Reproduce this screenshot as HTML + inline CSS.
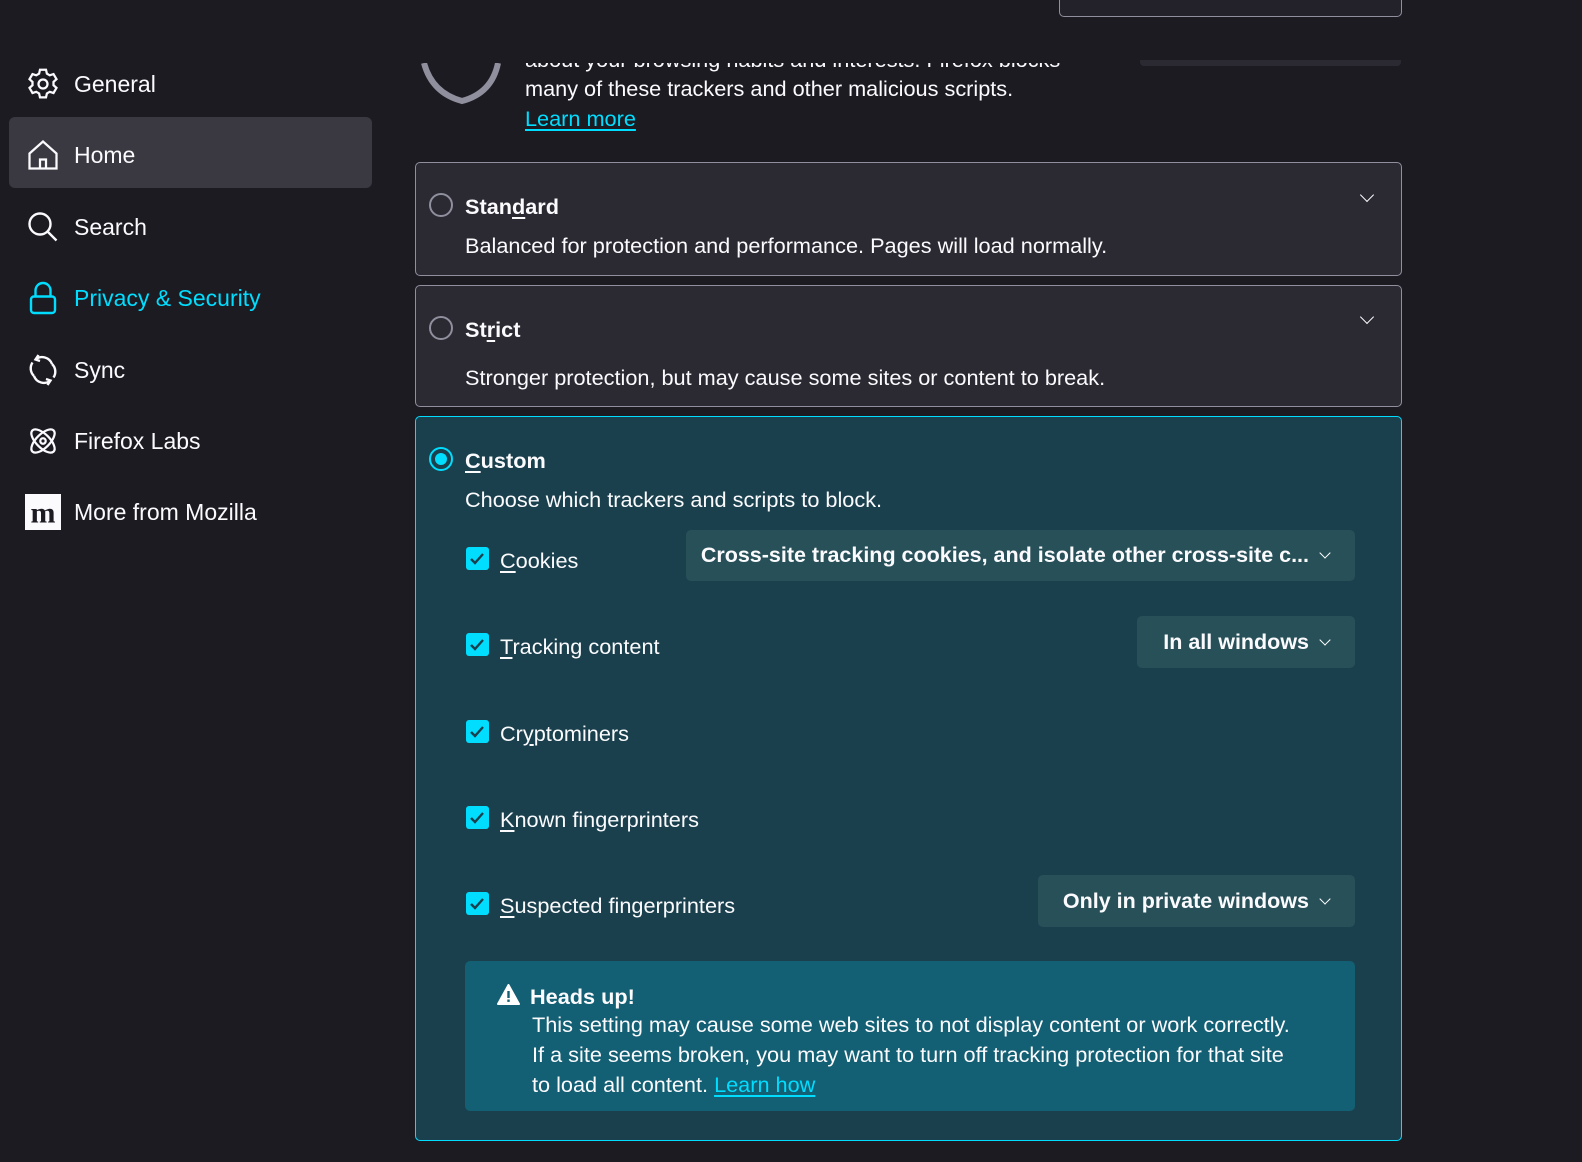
<!DOCTYPE html>
<html><head><meta charset="utf-8"><style>
*{margin:0;padding:0;box-sizing:border-box}
body{width:1582px;height:1162px;background:#1c1b22;color:#fbfbfe;font-family:"Liberation Sans",sans-serif;position:relative;overflow:hidden}
.a{position:absolute}
.nav{position:absolute;left:25px;display:flex;align-items:center;font-size:23px;height:40px}
.nav svg{width:36px;height:36px;margin-right:13px}
.card{position:absolute;left:415px;width:987px;background:#2b2a33;border:1px solid #8f8f9d;border-radius:5px}
.radio{position:absolute;width:24px;height:24px;border:2px solid #8f8f9d;border-radius:50%}
.t{position:absolute;font-size:21.7px;white-space:nowrap}
.b{font-weight:bold}
.cb{position:absolute;left:466px;width:23px;height:23px;background:#00ddff;border-radius:3px}
.cb svg{width:23px;height:23px}
.dd{position:absolute;background:#285059;border-radius:5px;font-size:21.5px;font-weight:bold;display:flex;align-items:center;justify-content:flex-end;padding-right:26px;white-space:nowrap}
.dd:after{content:"";width:7px;height:7px;border-right:1.5px solid #fff;border-bottom:1.5px solid #fff;transform:rotate(45deg);margin-left:12px;margin-top:-5px}
.chev{position:absolute;width:10px;height:10px;border-right:1.8px solid #fbfbfe;border-bottom:1.8px solid #fbfbfe;transform:rotate(45deg)}
u{text-decoration:underline;text-underline-offset:3px}
</style></head><body>
<div class="a" style="left:1059px;top:-20px;width:343px;height:37px;border:1px solid #8f8f9d;border-radius:5px;background:#23222b"></div>
<div class="a" style="left:1140px;top:60px;width:261px;height:6px;background:#2b2a33;border-radius:0 0 4px 4px"></div>
<div class="a" style="left:0;top:63px;width:1582px;height:80px;overflow:hidden">
 <div class="t" style="left:525px;top:-16px">about your browsing habits and interests. Firefox blocks</div>
</div>
<svg class="a" style="left:418px;top:63px" width="90" height="45"><path d="M6 0 Q14 30 44 38 Q74 30 80 0" fill="none" stroke="#8f8f9d" stroke-width="6"/></svg>
<div class="t" style="left:525px;top:76px">many of these trackers and other malicious scripts.</div>
<div class="t" style="left:525px;top:106px;color:#00ddff"><u>Learn more</u></div>

<div class="a" style="left:9px;top:117px;width:363px;height:71px;background:#3a3941;border-radius:6px"></div>
<div class="nav" style="top:64px"><svg viewBox="0 0 24 24" fill="none" stroke="#fbfbfe" stroke-width="1.5"><path d="M10 2.5h4l.6 2.6 1.9 1.1 2.5-.8 2 3.4-2 1.8v2.2l2 1.8-2 3.4-2.5-.8-1.9 1.1-.6 2.6h-4l-.6-2.6-1.9-1.1-2.5.8-2-3.4 2-1.8v-2.2l-2-1.8 2-3.4 2.5.8 1.9-1.1z"/><circle cx="12" cy="12" r="3"/></svg>General</div>
<div class="nav" style="top:135px"><svg viewBox="0 0 24 24" fill="none" stroke="#fbfbfe" stroke-width="1.5"><path d="M3 11 12 3l9 8v10H3z"/><path d="M10 21v-6h4v6"/></svg>Home</div>
<div class="nav" style="top:207px"><svg viewBox="0 0 24 24" fill="none" stroke="#fbfbfe" stroke-width="1.6"><circle cx="10" cy="10" r="7"/><path d="m15 15 6 6"/></svg>Search</div>
<div class="nav" style="top:278px;color:#00ddff"><svg viewBox="0 0 24 24" fill="none" stroke="#00ddff" stroke-width="1.6"><path d="M7 11V7a5 5 0 0 1 10 0v4"/><rect x="4" y="11" width="16" height="11" rx="2"/></svg>Privacy &amp; Security</div>
<div class="nav" style="top:350px"><svg viewBox="0 0 24 24" fill="none" stroke="#fbfbfe" stroke-width="1.6"><path d="M18 8a7 7 0 0 0-11-3"/><path d="M6 16a7 7 0 0 0 11 3"/><path d="M5 7a7 7 0 0 0 1 9"/><path d="M19 17a7 7 0 0 0-1-9"/><path d="M9 2l-2 3 3 1"/><path d="M15 22l2-3-3-1"/></svg>Sync</div>
<div class="nav" style="top:421px"><svg viewBox="0 0 24 24" fill="none" stroke="#fbfbfe" stroke-width="1.5"><ellipse cx="12" cy="12" rx="10" ry="4.5" transform="rotate(45 12 12)"/><ellipse cx="12" cy="12" rx="10" ry="4.5" transform="rotate(-45 12 12)"/><circle cx="12" cy="12" r="1.8"/></svg>Firefox Labs</div>
<div class="nav" style="top:492px"><svg viewBox="0 0 24 24"><rect x="0" y="0" width="24" height="24" fill="#fbfbfe"/><text x="12" y="19" font-size="20" font-weight="bold" font-family="Liberation Serif,serif" text-anchor="middle" fill="#1c1b22">m</text></svg>More from Mozilla</div>

<div class="card" style="top:162px;height:114px"></div>
<div class="radio" style="left:429px;top:193px"></div>
<div class="t b" style="left:465px;top:194px">Stan<u>d</u>ard</div>
<div class="chev" style="left:1362px;top:190px"></div>
<div class="t" style="left:465px;top:233px">Balanced for protection and performance. Pages will load normally.</div>
<div class="card" style="top:285px;height:122px"></div>
<div class="radio" style="left:429px;top:316px"></div>
<div class="t b" style="left:465px;top:317px">St<u>r</u>ict</div>
<div class="chev" style="left:1362px;top:312px"></div>
<div class="t" style="left:465px;top:365px">Stronger protection, but may cause some sites or content to break.</div>
<div class="card" style="top:416px;height:725px;background:#1a404d;border-color:#00ddff"></div>
<div class="radio" style="left:429px;top:447px;border-color:#00ddff"><div class="a" style="left:4px;top:4px;width:12px;height:12px;border-radius:50%;background:#00ddff"></div></div>
<div class="t b" style="left:465px;top:448px"><u>C</u>ustom</div>
<div class="t" style="left:465px;top:487px">Choose which trackers and scripts to block.</div>

<div class="cb" style="top:547px"><svg viewBox="0 0 23 23"><path d="M5 12l4 4 8-9" fill="none" stroke="#1a404d" stroke-width="2.4"/></svg></div>
<div class="t" style="left:500px;top:548px"><u>C</u>ookies</div>
<div class="dd" style="left:686px;top:530px;width:669px;height:51px">Cross-site tracking cookies, and isolate other cross-site c...</div>

<div class="cb" style="top:633px"><svg viewBox="0 0 23 23"><path d="M5 12l4 4 8-9" fill="none" stroke="#1a404d" stroke-width="2.4"/></svg></div>
<div class="t" style="left:500px;top:634px"><u>T</u>racking content</div>
<div class="dd" style="left:1137px;top:616px;width:218px;height:52px">In all windows</div>

<div class="cb" style="top:720px"><svg viewBox="0 0 23 23"><path d="M5 12l4 4 8-9" fill="none" stroke="#1a404d" stroke-width="2.4"/></svg></div>
<div class="t" style="left:500px;top:721px">Cr<u>y</u>ptominers</div>

<div class="cb" style="top:806px"><svg viewBox="0 0 23 23"><path d="M5 12l4 4 8-9" fill="none" stroke="#1a404d" stroke-width="2.4"/></svg></div>
<div class="t" style="left:500px;top:807px"><u>K</u>nown fingerprinters</div>

<div class="cb" style="top:892px"><svg viewBox="0 0 23 23"><path d="M5 12l4 4 8-9" fill="none" stroke="#1a404d" stroke-width="2.4"/></svg></div>
<div class="t" style="left:500px;top:893px"><u>S</u>uspected fingerprinters</div>
<div class="dd" style="left:1038px;top:875px;width:317px;height:52px">Only in private windows</div>

<div class="a" style="left:465px;top:961px;width:890px;height:150px;background:#135f73;border-radius:5px"></div>
<svg class="a" style="left:497px;top:984px" width="23" height="21" viewBox="0 0 23 21"><path d="M11.5 1 22 20H1z" fill="#fff" stroke="#fff" stroke-linejoin="round" stroke-width="2"/><rect x="10.3" y="7" width="2.4" height="7" fill="#135f73"/><rect x="10.3" y="15.5" width="2.4" height="2.4" fill="#135f73"/></svg>
<div class="t b" style="left:530px;top:984px">Heads up!</div>
<div class="t" style="left:532px;top:1010px;line-height:30px">This setting may cause some web sites to not display content or work correctly.<br>If a site seems broken, you may want to turn off tracking protection for that site<br>to load all content. <span style="color:#00ddff"><u>Learn how</u></span></div>
</body></html>
